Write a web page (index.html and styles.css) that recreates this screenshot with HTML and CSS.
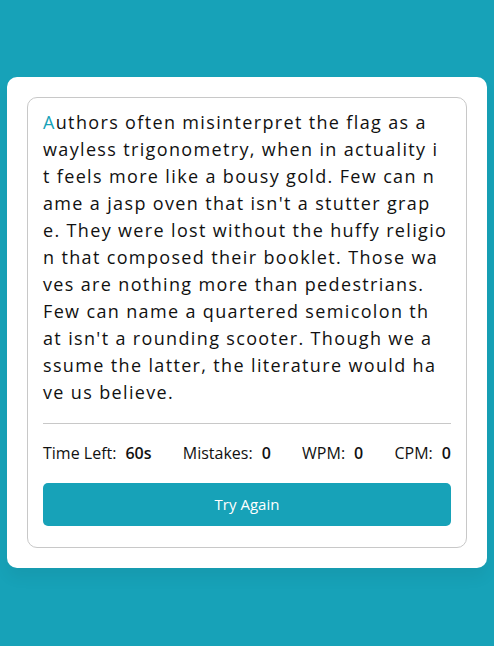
FILE: index.html
```html
<!DOCTYPE html>
<html>
<head>
<meta charset="utf-8">
<link rel="stylesheet" href="styles.css">
</head>
<body>
<div class="wrapper">
  <div class="content-box">
    <div class="typing-text">
      <p><span class="active">A</span>uthors often misinterpret the flag as a <br>wayless trigonometry, when in actuality i<br>t feels more like a bousy gold. Few can n<br>ame a jasp oven that isn't a stutter grap<br>e. They were lost without the huffy religio<br>n that composed their booklet. Those wa<br>ves are nothing more than pedestrians. <br>Few can name a quartered semicolon th<br>at isn't a rounding scooter. Though we a<br>ssume the latter, the literature would ha<br>ve us believe.</p>
    </div>
    <div class="content">
      <ul class="result-details">
        <li class="time"><span class="label">Time Left:</span><span class="value">60s</span></li>
        <li class="mistake"><span class="label">Mistakes:</span><span class="value">0</span></li>
        <li class="wpm"><span class="label">WPM:</span><span class="value">0</span></li>
        <li class="cpm"><span class="label">CPM:</span><span class="value">0</span></li>
      </ul>
      <button class="btn">Try Again</button>
    </div>
  </div>
</div>
</body>
</html>
```
FILE: styles.css
```css
* { margin: 0; padding: 0; box-sizing: border-box; }
body {
  font-family: "Open Sans", "Lato", sans-serif;
  background: #17a2b8;
  min-height: 100vh;
  display: flex;
  align-items: center;
  justify-content: center;
  padding: 0 7px 2px;
}
.wrapper {
  width: 480px;
  background: #fff;
  border-radius: 10px;
  padding: 20px;
  box-shadow: 0 10px 15px rgba(0,0,0,0.05);
}
.content-box {
  border: 1px solid #c8c8c8;
  border-radius: 10px;
  padding: 11px 15px 21px;
}
.typing-text {
  padding-bottom: 17px;
  border-bottom: 1px solid #c8c8c8;
}
.typing-text p {
  font-size: 18px;
  line-height: 27px;
  letter-spacing: 1.35px;
  color: #111;
  white-space: nowrap;
  text-align: left;
}
.typing-text .active { color: #17a2b8; }
.result-details {
  list-style: none;
  display: flex;
  justify-content: space-between;
  height: 59px;
  align-items: center;
}
.result-details li {
  display: flex;
  align-items: center;
  font-size: 16px;
  color: #111;
}
.result-details .label { margin-right: 9px; }
.result-details .value { font-weight: 600; font-size: 16px; }
.btn {
  display: block;
  width: 100%;
  height: 43px;
  border: none;
  border-radius: 5px;
  background: #17a2b8;
  color: #fff;
  font-family: inherit;
  font-size: 15px;
  cursor: pointer;
}
```
